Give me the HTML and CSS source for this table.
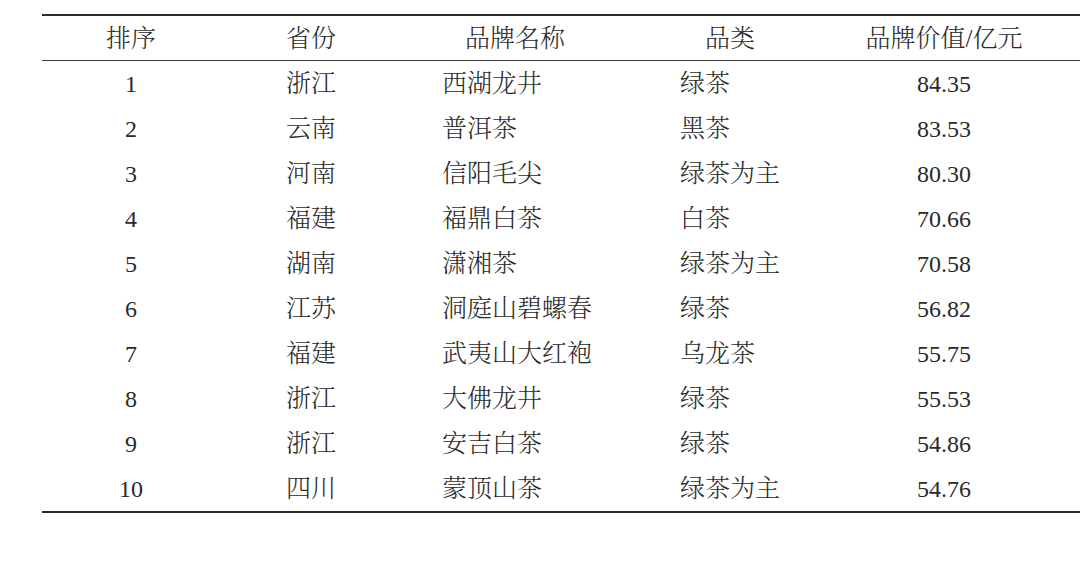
FILE: index.html
```html
<!DOCTYPE html>
<html lang="zh-CN">
<head>
<meta charset="utf-8">
<title>茶叶品牌价值</title>
<link rel="stylesheet" href="styles.css">
</head>
<body>
<table class="brand-table">
  <colgroup>
    <col class="c-rank">
    <col class="c-prov">
    <col class="c-name">
    <col class="c-cat">
    <col class="c-val">
  </colgroup>
  <thead>
    <tr>
      <th class="rank">排序</th>
      <th class="prov">省份</th>
      <th class="name">品牌名称</th>
      <th class="cat">品类</th>
      <th class="val">品牌价值/亿元</th>
    </tr>
  </thead>
  <tbody>
    <tr><td class="rank">1</td><td class="prov">浙江</td><td class="name">西湖龙井</td><td class="cat">绿茶</td><td class="val">84.35</td></tr>
    <tr><td class="rank">2</td><td class="prov">云南</td><td class="name">普洱茶</td><td class="cat">黑茶</td><td class="val">83.53</td></tr>
    <tr><td class="rank">3</td><td class="prov">河南</td><td class="name">信阳毛尖</td><td class="cat">绿茶为主</td><td class="val">80.30</td></tr>
    <tr><td class="rank">4</td><td class="prov">福建</td><td class="name">福鼎白茶</td><td class="cat">白茶</td><td class="val">70.66</td></tr>
    <tr><td class="rank">5</td><td class="prov">湖南</td><td class="name">潇湘茶</td><td class="cat">绿茶为主</td><td class="val">70.58</td></tr>
    <tr><td class="rank">6</td><td class="prov">江苏</td><td class="name">洞庭山碧螺春</td><td class="cat">绿茶</td><td class="val">56.82</td></tr>
    <tr><td class="rank">7</td><td class="prov">福建</td><td class="name">武夷山大红袍</td><td class="cat">乌龙茶</td><td class="val">55.75</td></tr>
    <tr><td class="rank">8</td><td class="prov">浙江</td><td class="name">大佛龙井</td><td class="cat">绿茶</td><td class="val">55.53</td></tr>
    <tr><td class="rank">9</td><td class="prov">浙江</td><td class="name">安吉白茶</td><td class="cat">绿茶</td><td class="val">54.86</td></tr>
    <tr><td class="rank">10</td><td class="prov">四川</td><td class="name">蒙顶山茶</td><td class="cat">绿茶为主</td><td class="val">54.76</td></tr>
  </tbody>
</table>
</body>
</html>
```

FILE: styles.css
```css
html, body {
  margin: 0;
  padding: 0;
  background: #ffffff;
  overflow: hidden;
}

body {
  font-family: "Liberation Serif", "Noto Serif CJK SC", "Noto Sans CJK SC", serif;
  color: #2a2a2a;
}

.brand-table {
  margin: 14px 0 0 42px;
  width: 1038px;
  table-layout: fixed;
  border-collapse: collapse;
  border-top: 2px solid #2b2b2b;
  border-bottom: 2px solid #2b2b2b;
}

.c-rank { width: 178px; }
.c-prov { width: 182px; }
.c-name { width: 238px; }
.c-cat  { width: 190px; }
.c-val  { width: 250px; }

.brand-table th,
.brand-table td {
  padding: 0;
  font-size: 25px;
  font-weight: 300;
  line-height: 1;
  white-space: nowrap;
  vertical-align: middle;
}

.brand-table th {
  height: 44px;
  border-bottom: 1px solid #3a3a3a;
}

.brand-table td {
  height: 45px;
}

.brand-table .rank,
.brand-table .prov { text-align: center; }

.brand-table th.name { text-align: left; padding-left: 63px; }
.brand-table td.name { text-align: left; padding-left: 40px; }

.brand-table th.cat { text-align: left; padding-left: 65px; }
.brand-table td.cat { text-align: left; padding-left: 40px; }

.brand-table th.val,
.brand-table td.val { text-align: center; padding-right: 22px; }

.brand-table td.rank,
.brand-table td.val { font-size: 24px; font-weight: 400; }
```
